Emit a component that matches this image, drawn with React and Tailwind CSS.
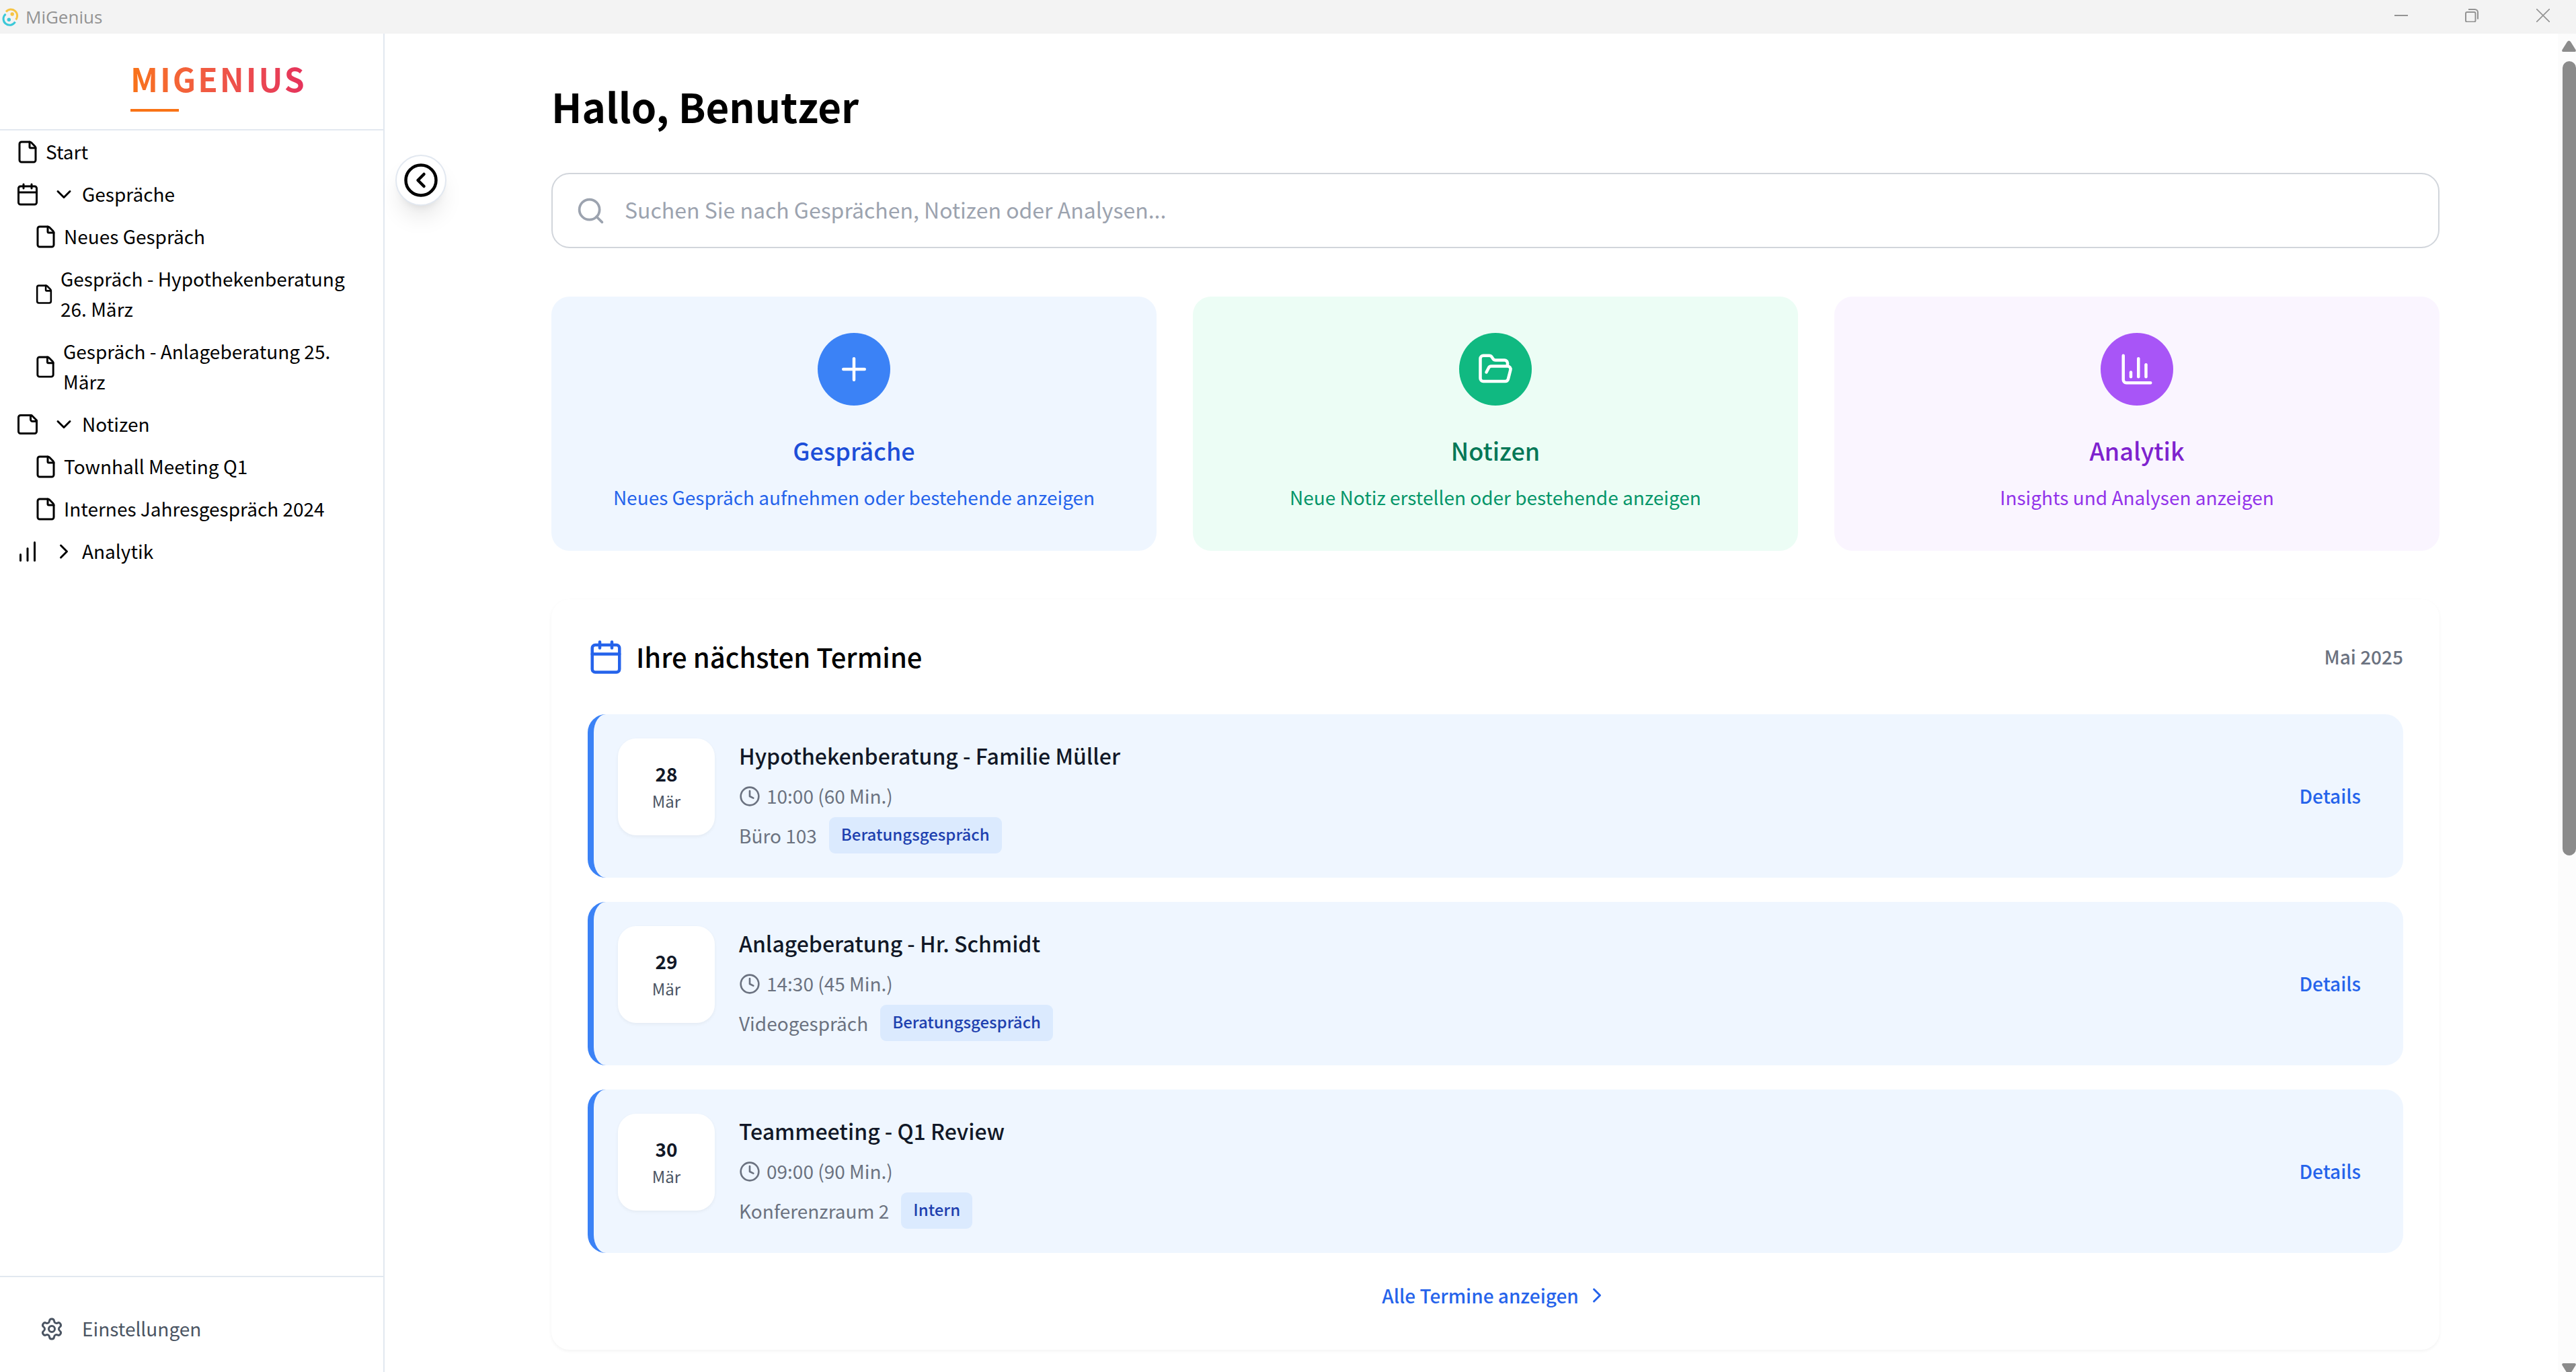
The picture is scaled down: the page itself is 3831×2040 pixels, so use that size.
import React from "react";
import {
  Calendar, ChevronDown, ChevronRight, CircleChevronLeft, File, Search, Plus,
  FolderOpen, ChartColumn, Clock, Settings, ChartNoAxesColumnIncreasing,
} from "lucide-react";

function AppLogo() {
  return (
    <svg viewBox="0 0 28 32" className="h-[32px] w-[28px]" fill="none" strokeWidth="3" aria-hidden="true">
      <path d="M8 8.500A9.300 9.300 0 1 1 22.500 20.300" stroke="#f6c445" />
      <path d="M7.500 11.800A9.300 9.300 0 1 0 21.500 23.500" stroke="#3bc8d8" />
      <circle cx="17.200" cy="12" r="2.700" fill="#f6c445" />
      <circle cx="12.300" cy="20.300" r="2.700" fill="#3bc8d8" />
    </svg>
  );
}

function NoteIcon() {
  return (
    <svg viewBox="0 0 24 24" className="size-9 shrink-0" fill="none" stroke="currentColor" strokeWidth="2" strokeLinecap="round" strokeLinejoin="round" aria-hidden="true">
      <path d="M16 3H5a2 2 0 0 0-2 2v14a2 2 0 0 0 2 2h14a2 2 0 0 0 2-2V8Z" />
      <path d="M15 3v4a2 2 0 0 0 2 2h4" />
    </svg>
  );
}

function TitleBar() {
  return (
    <header className="flex h-[50px] shrink-0 items-center bg-[#f3f3f3] text-[#939393]">
      <div className="flex flex-1 items-center gap-[9px] pl-px">
        <AppLogo />
        <span className="font-['Open_Sans',sans-serif] text-[26px] leading-[36px]">MiGenius</span>
      </div>
      <div className="flex h-full">
        <button aria-label="Minimieren" className="flex w-[96px] items-start justify-center pt-[13px]">
          <svg viewBox="0 0 20 20" className="size-5" stroke="currentColor" strokeWidth="2"><path d="M0 10H20" /></svg>
        </button>
        <button aria-label="Wiederherstellen" className="flex w-[114px] items-start justify-center pt-[13px]">
          <svg viewBox="0 0 20 20" className="size-5" fill="none" stroke="currentColor" strokeWidth="2">
            <rect x="1" y="5" width="14.500" height="14.500" rx="2" />
            <path d="M5 1h9.500a4.500 4.500 0 0 1 4.500 4.500v10" />
          </svg>
        </button>
        <button aria-label="Schließen" className="flex w-[98px] items-start justify-center pt-[13px]">
          <svg viewBox="0 0 20 20" className="size-5" stroke="currentColor" strokeWidth="1.600"><path d="M0 0L20 20M20 0L0 20" /></svg>
        </button>
      </div>
    </header>
  );
}

function Group({ icon, label, open }) {
  return (
    <button aria-expanded={!!open} className="flex w-full items-center py-[9px] pl-[23px] text-left">
      {icon}
      {open ? <ChevronDown className="ml-[18px] size-9" /> : <ChevronRight className="ml-[18px] size-9" />}
      <span className="ml-[9px]">{label}</span>
    </button>
  );
}

function Leaf({ label, top, size = "size-9" }) {
  return (
    <a href="#" className={`flex items-center gap-[9px] py-[9px] pr-10 ${top ? "pl-[23px]" : "pl-[50px]"}`}>
      <File className={`${size} shrink-0`} />
      <span>{label}</span>
    </a>
  );
}

function Sidebar() {
  return (
    <aside className="flex w-[572px] shrink-0 flex-col border-r-2 border-[#e2e8f0] bg-white">
      <div className="flex h-[144px] flex-col border-b-2 border-[#e2e8f0] pt-[30px] pl-[194px]">
        <span className="w-fit bg-gradient-to-r from-[#f97316] to-[#e5315c] bg-clip-text text-[48px] leading-[72px] font-bold tracking-[3px] text-transparent">MIGENIUS</span>
        <span className="mt-[10px] h-1 w-[72px] bg-[#f97316]" />
      </div>
      <nav className="flex-1 text-[28px] leading-[45px] text-black">
        <Leaf top label="Start" />
        <Group open label="Gespräche" icon={<Calendar className="size-9" />} />
        <Leaf label="Neues Gespräch" />
        <Leaf label="Gespräch - Hypothekenberatung 26. März" size="size-[31px]" />
        <Leaf label="Gespräch - Anlageberatung 25. März" size="size-[35px]" />
        <Group open label="Notizen" icon={<NoteIcon />} />
        <Leaf label="Townhall Meeting Q1" />
        <Leaf label="Internes Jahresgespräch 2024" />
        <Group label="Analytik" icon={<ChartNoAxesColumnIncreasing className="size-9" />} />
      </nav>
      <div className="border-t-2 border-[#e2e8f0] px-[59px] pt-[54px] pb-[42px]">
        <button className="flex items-center gap-[27px] text-[28px] leading-[45px] text-[#4b5563]">
          <Settings className="size-9" />
          Einstellungen
        </button>
      </div>
    </aside>
  );
}

const cards = [
  { title: "Gespräche", text: "Neues Gespräch aufnehmen oder bestehende anzeigen", Icon: Plus, bg: "bg-[#eff6ff]", dot: "bg-[#3b82f6]", head: "text-[#1d4ed8]", body: "text-[#2563eb]" },
  { title: "Notizen", text: "Neue Notiz erstellen oder bestehende anzeigen", Icon: FolderOpen, bg: "bg-[#ecfdf5]", dot: "bg-[#10b981]", head: "text-[#047857]", body: "text-[#059669]" },
  { title: "Analytik", text: "Insights und Analysen anzeigen", Icon: ChartColumn, bg: "bg-[#faf5ff]", dot: "bg-[#a855f7]", head: "text-[#7e22ce]", body: "text-[#9333ea]" },
];

const events = [
  { day: "28", title: "Hypothekenberatung - Familie Müller", time: "10:00 (60 Min.)", place: "Büro 103", tag: "Beratungsgespräch" },
  { day: "29", title: "Anlageberatung - Hr. Schmidt", time: "14:30 (45 Min.)", place: "Videogespräch", tag: "Beratungsgespräch" },
  { day: "30", title: "Teammeeting - Q1 Review", time: "09:00 (90 Min.)", place: "Konferenzraum 2", tag: "Intern" },
];

function Event({ day, title, time, place, tag }) {
  return (
    <li className="flex items-center gap-9 rounded-[27px] border-l-[9px] border-[#3b82f6] bg-[#eff6ff] p-9">
      <div className="flex size-[144px] flex-col items-center justify-center self-start rounded-[27px] bg-white pb-1 shadow-[0_2px_5px_rgba(0,0,0,0.05)]">
        <span className="text-[28px] leading-[45px] font-bold text-[#111827]">{day}</span>
        <span className="text-[24px] leading-[36px] text-[#4b5563]">Mär</span>
      </div>
      <div className="flex flex-1 flex-col gap-[9px]">
        <h3 className="pb-1 text-[32px] leading-[50px] font-medium text-[#111827]">{title}</h3>
        <p className="flex items-center gap-[9px] text-[28px] leading-[45px] text-[#6b7280]">
          <Clock className="size-8" />
          {time}
        </p>
        <p className="flex items-center gap-[18px] text-[28px] leading-[45px] text-[#6b7280]">
          {place}
          <span className="rounded-[9px] bg-[#dbeafe] px-[18px] pt-[7px] pb-[11px] text-[24px] leading-[36px] font-medium text-[#1e40af]">{tag}</span>
        </p>
      </div>
      <button className="px-[27px] text-[28px] leading-[45px] font-medium text-[#2563eb]">Details</button>
    </li>
  );
}

function Scrollbar() {
  return (
    <div className="flex w-[27px] shrink-0 flex-col items-end bg-[#fcfcfc] text-[#8b8b8b]" aria-hidden="true">
      <svg viewBox="0 0 21 18" className="mt-[10px] h-[18px] w-[21px] shrink-0" fill="currentColor"><path d="M8 2Q10.500-1 13 2L20.500 14Q21.500 17 19 17H2Q-.5 17 .5 14Z" /></svg>
      <div className="mt-[13px] h-[1181px] w-5 rounded-full bg-[#8b8b8b]" />
      <svg viewBox="0 0 21 18" className="mt-auto -mb-1 h-[18px] w-[21px] shrink-0 rotate-180" fill="currentColor"><path d="M8 2Q10.500-1 13 2L20.500 14Q21.500 17 19 17H2Q-.5 17 .5 14Z" /></svg>
    </div>
  );
}

export default function App() {
  return (
    <div className="flex h-screen flex-col overflow-hidden bg-white font-['Noto_Sans_CJK_JP',sans-serif]">
      <TitleBar />
      <div className="flex min-h-0 flex-1">
        <Sidebar />
        <div className="w-[72px] shrink-0 pt-[180px] pl-4">
          <button aria-label="Seitenleiste einklappen" className="flex size-[76px] items-center justify-center rounded-full border-2 border-[#e2e8f0] bg-white text-black shadow-[0_22px_34px_-7px_rgba(0,0,0,0.1),0_9px_14px_-9px_rgba(0,0,0,0.1)]">
            <CircleChevronLeft className="size-[54px]" />
          </button>
        </div>
        <main className="min-w-0 flex-1 overflow-hidden">
          <div className="mx-auto max-w-[2880px] px-9 pt-[66px] pb-8">
            <h1 className="text-[60px] leading-[81px] font-bold text-black">Hallo, Benutzer</h1>
            <label className="mt-[60px] flex h-[112px] items-center rounded-[27px] border-2 border-[#d1d5db] bg-white pl-[34px]">
              <Search className="size-[45px] text-[#9ca3af]" />
              <input type="search" aria-label="Suche" placeholder="Suchen Sie nach Gesprächen, Notizen oder Analysen..." className="ml-[28px] h-full flex-1 bg-transparent pb-1 text-[32px] outline-none placeholder:text-[#9ca3af]" />
            </label>
            <div className="mt-[72px] grid grid-cols-3 gap-[54px]">
              {cards.map(({ title, text, Icon, bg, dot, head, body }) => (
                <button key={title} className={`flex flex-col items-center rounded-[27px] px-[54px] pt-[54px] pb-[57px] ${bg}`}>
                  <span className={`flex size-[108px] items-center justify-center rounded-full text-white ${dot}`}><Icon className="size-[54px]" /></span>
                  <span className={`mt-9 text-[36px] leading-[60px] font-medium ${head}`}>{title}</span>
                  <span className={`mt-[18px] text-[28px] leading-[45px] ${body}`}>{text}</span>
                </button>
              ))}
            </div>
            <section className="mt-[72px] rounded-[27px] bg-white p-[54px] shadow-[0_2px_5px_rgba(0,0,0,0.05)]">
              <div className="flex items-center justify-between">
                <h2 className="flex items-center gap-[18px] text-[40px] leading-[63px] font-medium text-black">
                  <Calendar className="size-[54px] text-[#2563eb]" />
                  Ihre nächsten Termine
                </h2>
                <span className="text-[28px] leading-[45px] font-medium text-[#6b7280]">Mai 2025</span>
              </div>
              <ul className="mt-[54px] flex flex-col gap-9">
                {events.map((e) => <Event key={e.day} {...e} />)}
              </ul>
              <div className="mt-9 flex justify-center">
                <button className="flex items-center gap-[9px] text-[28px] leading-[54px] font-medium text-[#2563eb]">
                  Alle Termine anzeigen
                  <ChevronRight className="size-9" />
                </button>
              </div>
            </section>
          </div>
        </main>
        <Scrollbar />
      </div>
    </div>
  );
}
